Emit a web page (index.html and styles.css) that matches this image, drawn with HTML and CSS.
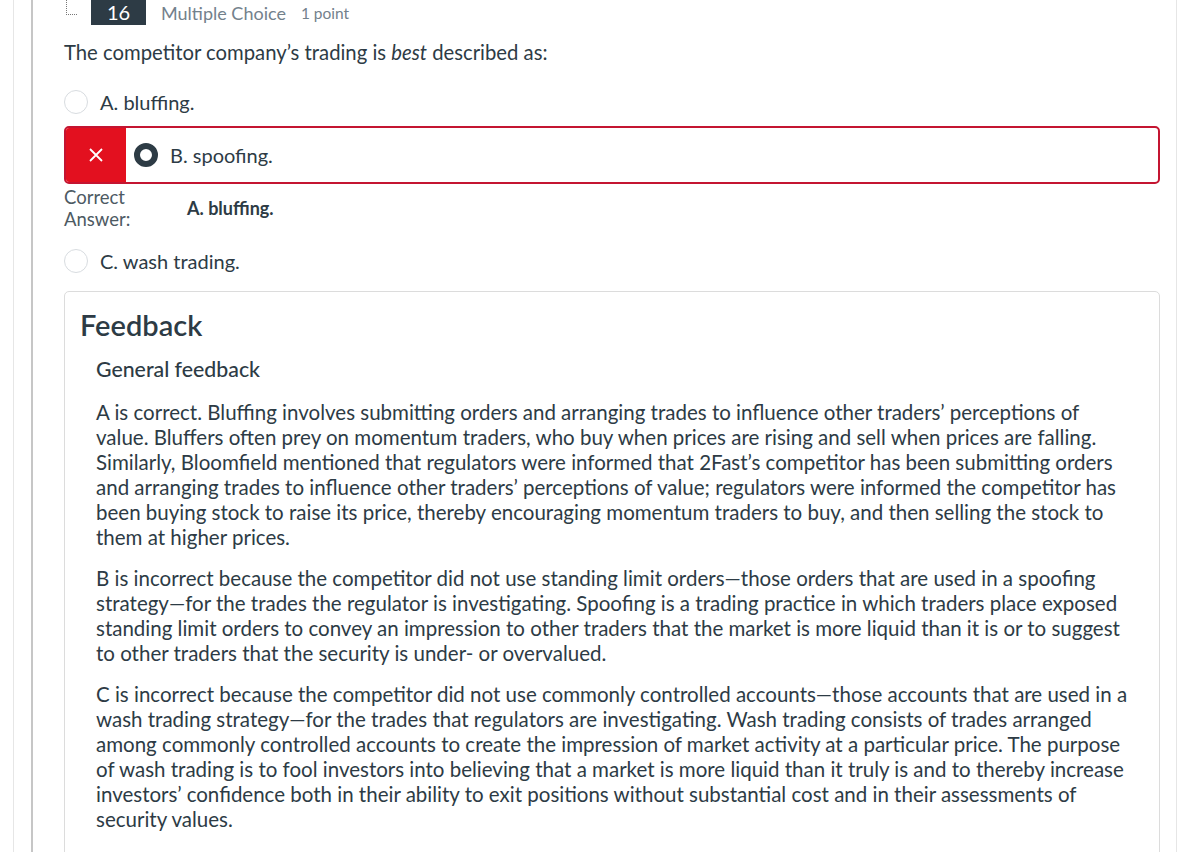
FILE: index.html
```html
<!DOCTYPE html>
<html lang="en">
<head>
<meta charset="utf-8">
<title>Quiz results</title>
<link rel="stylesheet" href="styles.css">
</head>
<body>
<div class="outer">
  <div class="inner">
    <div class="q-header">
      <span class="tree-mark"></span>
      <span class="q-num">16</span>
      <span class="q-type">Multiple Choice</span>
      <span class="q-points">1 point</span>
    </div>
    <p class="q-text">The competitor company’s trading is <em>best</em> described as:</p>

    <div class="answer answer-a">
      <span class="radio"></span>
      <span class="answer-label">A. bluffing.</span>
    </div>

    <div class="answer-wrong">
      <div class="wrong-flag">
        <svg width="16" height="16" viewBox="0 0 16 16"><path d="M2 2 L14 14 M14 2 L2 14" stroke="#fff" stroke-width="1.8" fill="none"/></svg>
      </div>
      <div class="answer answer-in">
        <span class="radio radio-checked"></span>
        <span class="answer-label">B. spoofing.</span>
      </div>
    </div>

    <div class="correct-row">
      <div class="correct-label">Correct<br>Answer:</div>
      <div class="correct-value">A. bluffing.</div>
    </div>

    <div class="answer answer-c">
      <span class="radio"></span>
      <span class="answer-label">C. wash trading.</span>
    </div>

    <section class="feedback">
      <h2 class="fb-title">Feedback</h2>
      <div class="fb-body">
        <h3 class="fb-sub">General feedback</h3>
        <p>A is correct. Bluffing involves submitting orders and arranging trades to influence other traders’ perceptions of value. Bluffers often prey on momentum traders, who buy when prices are rising and sell when prices are falling. Similarly, Bloomfield mentioned that regulators were informed that 2Fast’s competitor has been submitting orders and arranging trades to influence other traders’ perceptions of value; regulators were informed the competitor has been buying stock to raise its price, thereby encouraging momentum traders to buy, and then selling the stock to them at higher prices.</p>
        <p>B is incorrect because the competitor did not use standing limit orders—those orders that are used in a spoofing strategy—for the trades the regulator is investigating. Spoofing is a trading practice in which traders place exposed standing limit orders to convey an impression to other traders that the market is more liquid than it is or to suggest to other traders that the security is under- or overvalued.</p>
        <p>C is incorrect because the competitor did not use commonly controlled accounts—those accounts that are used in a wash trading strategy—for the trades that regulators are investigating. Wash trading consists of trades arranged among commonly controlled accounts to create the impression of market activity at a particular price. The purpose of wash trading is to fool investors into believing that a market is more liquid than it truly is and to thereby increase investors’ confidence both in their ability to exit positions without substantial cost and in their assessments of security values.</p>
      </div>
    </section>
  </div>
</div>
</body>
</html>
```

FILE: styles.css
```css
html, body {
  margin: 0;
  padding: 0;
  background: #fff;
}
body {
  font-family: Lato, "Open Sans", sans-serif;
  color: #2d3b45;
  width: 1200px;
  height: 852px;
  overflow: hidden;
}
.outer {
  margin-left: 13px;
  border-left: 1px solid #e6e6e6;
  padding-left: 17px;
  height: 852px;
}
.inner {
  border-left: 2px solid #c6c6c6;
  border-right: 1px solid #e6e6e6;
  padding-left: 31px;
  padding-right: 16px;
  width: 1096px;
  height: 852px;
  overflow: hidden;
}
.q-header {
  display: flex;
  align-items: center;
  height: 25px;
}
.tree-mark {
  width: 10px;
  height: 14px;
  margin-left: 2px;
  align-self: flex-start;
  border-left: 1px dotted #777;
  border-bottom: 1px dotted #777;
}
.q-num {
  margin-left: 14px;
  width: 55px;
  height: 25px;
  background: #2d3b45;
  color: #fff;
  font-size: 20px;
  line-height: 25px;
  text-align: center;
  align-self: flex-start;
}
.q-type {
  margin-left: 15px;
  font-size: 18px;
  color: #73818c;
}
.q-points {
  margin-left: 15px;
  font-size: 15.5px;
  color: #73818c;
}
.q-text {
  margin: 13px 0 0;
  font-size: 20.3px;
  line-height: 28px;
}
.answer {
  display: flex;
  align-items: center;
  height: 28px;
}
.answer-a {
  margin-top: 22px;
}
.answer-c {
  margin-top: 17px;
}
.radio {
  width: 24px;
  height: 24px;
  border: 1px solid #d8dce0;
  border-radius: 50%;
  box-sizing: border-box;
  flex: none;
}
.answer-label {
  margin-left: 12px;
  font-size: 20px;
}
.answer-wrong {
  display: flex;
  margin-top: 10px;
  height: 58px;
  border: 2px solid #c41531;
  border-radius: 5px;
  box-sizing: border-box;
  overflow: hidden;
}
.wrong-flag {
  width: 60px;
  background: #e3101f;
  display: flex;
  align-items: center;
  justify-content: center;
  flex: none;
}
.answer-in {
  margin: 0 0 0 8px;
  height: auto;
}
.radio-checked {
  width: 24px;
  height: 24px;
  border: 6px solid #2d3b45;
}
.correct-row {
  display: flex;
  align-items: center;
  margin-top: 2px;
}
.correct-label {
  font-size: 18.5px;
  line-height: 22px;
  color: #4d5a63;
  width: 123px;
}
.correct-value {
  font-size: 18px;
  font-weight: bold;
}
.feedback {
  margin-top: 16px;
  border: 1px solid #dcdcdc;
  border-radius: 5px;
  padding: 15px 15px 200px;
}
.fb-title {
  margin: 0;
  font-size: 29px;
  font-weight: 600;
  line-height: 36px;
}
.fb-body {
  padding-left: 16px;
  padding-right: 10px;
}
.fb-sub {
  margin: 14px 0 18px;
  font-size: 21.3px;
  font-weight: 500;
  line-height: 25px;
}
.fb-body p {
  margin: 0 0 16px;
  font-size: 20.5px;
  line-height: 25px;
}
```
